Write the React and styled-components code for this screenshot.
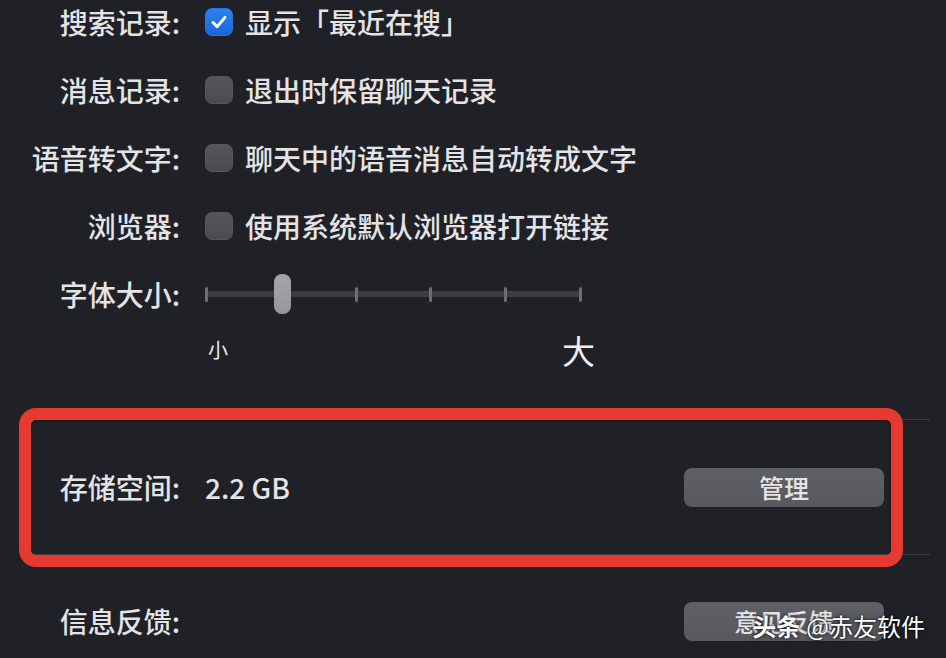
import React from "react";
import styled, { createGlobalStyle } from "styled-components";

const Global = createGlobalStyle`
  html, body { margin: 0; padding: 0; background: #1f2126; }
  body {
    font-family: "Noto Sans CJK SC", "Noto Sans", sans-serif;
    color: #e4e4e6;
    overflow: hidden;
  }
`;

const Page = styled.div`
  width: 946px;
  height: 658px;
  overflow: hidden;
  background: #1f2126;
`;

const List = styled.div`
  margin-top: -12px;
  display: flex;
  flex-direction: column;
`;

const Row = styled.div`
  display: grid;
  grid-template-columns: ${(p) => p.$lw || 180}px 1fr auto;
  column-gap: 25px;
  align-items: center;
  height: ${(p) => p.$h || 68}px;
  padding-right: ${(p) => p.$pr || 0}px;
  position: relative;
`;

const Label = styled.div`
  font-size: 28px;
  font-weight: 500;
  line-height: 1;
  text-align: right;
  white-space: nowrap;
  color: #e4e4e6;
`;

const Option = styled.label`
  display: flex;
  align-items: center;
  gap: 12px;
  font-size: 28px;
  font-weight: 500;
  line-height: 1;
  white-space: nowrap;
`;

const Box = styled.span`
  width: 28px;
  height: 28px;
  border-radius: 7px;
  box-sizing: border-box;
  display: flex;
  align-items: center;
  justify-content: center;
  background: ${(p) =>
    p.$checked
      ? "linear-gradient(#2d82ee, #1766d8)"
      : "linear-gradient(#55565b, #4a4b50)"};
  border: 1px solid ${(p) => (p.$checked ? "#2a74e0" : "#55565b")};
`;

const Checkbox = ({ checked }) => (
  <Box $checked={checked}>
    {checked && (
      <svg width="20" height="20" viewBox="0 0 20 20">
        <path
          d="M4 10.5 L8.2 14.6 L16 5.4"
          fill="none"
          stroke="#fff"
          strokeWidth="3"
          strokeLinecap="round"
          strokeLinejoin="round"
        />
      </svg>
    )}
  </Box>
);

const SliderWrap = styled.div`
  position: relative;
  width: 377px;
  height: 40px;
  display: flex;
  align-items: center;
`;

const Track = styled.div`
  flex: 1;
  height: 6px;
  background: #3a3c41;
  display: flex;
  justify-content: space-between;
  align-items: center;
`;

const Tick = styled.span`
  width: 3px;
  height: 15px;
  border-radius: 1.5px;
  background: #6c6e73;
`;

const Thumb = styled.span`
  position: absolute;
  top: 0;
  width: 17px;
  height: 40px;
  margin-left: -8px;
  border-radius: 8px;
  background: linear-gradient(#a4a5a9, #96979b);
`;

const SizeLabels = styled.div`
  width: 390px;
  display: flex;
  justify-content: space-between;
  align-items: center;
  padding-left: 3px;
  box-sizing: border-box;
`;

const SizeText = styled.span`
  font-size: ${(p) => p.$size}px;
  line-height: 1;
  color: #eeeeef;
`;

const Section = styled.div`
  position: relative;
  margin-top: 47px;
  margin-left: 24px;
  margin-right: 16px;
  border-top: 1px solid #3d3f44;
  border-bottom: 1px solid #3d3f44;
  height: 134px;
  display: flex;
  flex-direction: column;
  justify-content: center;
`;

const Highlight = styled.div`
  position: absolute;
  left: -5px;
  right: 27px;
  top: -12px;
  bottom: -13px;
  border: 12px solid #e6392f;
  border-radius: 17px;
  box-shadow: inset 0 1px 2px rgba(0, 0, 0, 0.5);
  pointer-events: none;
`;

const Value = styled.div`
  font-size: 28px;
  font-weight: 500;
  line-height: 1;
  white-space: nowrap;
`;

const Button = styled.button`
  width: 200px;
  height: 39px;
  border: none;
  border-radius: 8px;
  background: linear-gradient(#5f6065, #58595e);
  color: #e4e4e6;
  font-family: inherit;
  font-size: 25px;
  font-weight: 500;
  line-height: 1;
  padding: 0;
  display: flex;
  align-items: center;
  justify-content: center;
`;

const Feedback = styled(Row)`
  margin-top: 32px;
`;

const Watermark = styled.div`
  position: absolute;
  right: 21px;
  top: 27px;
  font-size: 24px;
  line-height: 1;
  color: #ffffff;
  white-space: nowrap;
  text-shadow: 0 0 2px rgba(0, 0, 0, 0.9), 0 0 4px rgba(0, 0, 0, 0.6);
`;

const Strong = styled.span`
  font-weight: 700;
  margin-right: 6px;
`;

const options = [
  { label: "搜索记录:", text: "显示「最近在搜」", checked: true },
  { label: "消息记录:", text: "退出时保留聊天记录", checked: false },
  { label: "语音转文字:", text: "聊天中的语音消息自动转成文字", checked: false },
  { label: "浏览器:", text: "使用系统默认浏览器打开链接", checked: false },
];

const stops = 6;
const current = 1;

export default function App() {
  return (
    <Page>
      <Global />
      <List>
        {options.map((o) => (
          <Row key={o.label}>
            <Label>{o.label}</Label>
            <Option>
              <Checkbox checked={o.checked} />
              <span>{o.text}</span>
            </Option>
            <span />
          </Row>
        ))}
        <Row>
          <Label>字体大小:</Label>
          <SliderWrap>
            <Track>
              {Array.from({ length: stops }).map((_, i) => (
                <Tick key={i} />
              ))}
            </Track>
            <Thumb style={{ left: `${(current / (stops - 1)) * 100 + 0.5}%` }} />
          </SliderWrap>
          <span />
        </Row>
        <Row $h={44}>
          <span />
          <SizeLabels>
            <SizeText $size={20}>小</SizeText>
            <SizeText $size={33}>大</SizeText>
          </SizeLabels>
          <span />
        </Row>
        <Section>
          <Row $lw={156} $pr={46}>
            <Label>存储空间:</Label>
            <Value>2.2 GB</Value>
            <Button>管理</Button>
          </Row>
          <Highlight />
        </Section>
        <Feedback $pr={62}>
          <Label>信息反馈:</Label>
          <span />
          <Button>意见反馈</Button>
          <Watermark>
            <Strong>头条</Strong>@赤友软件
          </Watermark>
        </Feedback>
      </List>
    </Page>
  );
}
